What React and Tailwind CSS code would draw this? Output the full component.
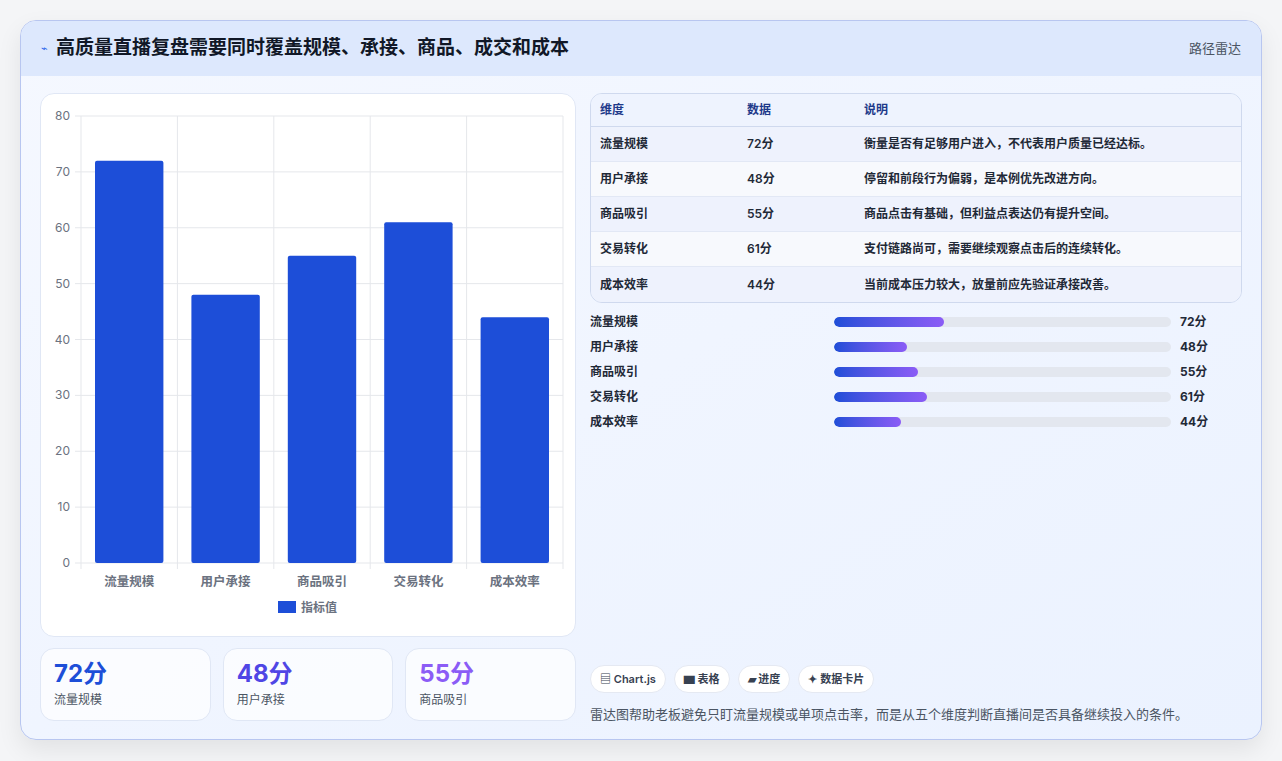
import React from "react";

const dims = [
  ["流量规模", 72, "衡量是否有足够用户进入，不代表用户质量已经达标。"],
  ["用户承接", 48, "停留和前段行为偏弱，是本例优先改进方向。"],
  ["商品吸引", 55, "商品点击有基础，但利益点表达仍有提升空间。"],
  ["交易转化", 61, "支付链路尚可，需要继续观察点击后的连续转化。"],
  ["成本效率", 44, "当前成本压力较大，放量前应先验证承接改善。"],
];

function Chart() {
  const x0 = 40, x1 = 522, yTop = 22, yBot = 469;
  const cw = (x1 - x0) / 5;
  const y = (v) => yBot - (v / 80) * (yBot - yTop);
  return (
    <svg width="535" height="543" className="block">
      {[0,10,20,30,40,50,60,70,80].map((v) => (
        <g key={v}>
          <line x1={x0 - 6} x2={x1} y1={y(v)} y2={y(v)} stroke="#e5e7eb" />
          <text x={x0 - 11} y={y(v) + 4} textAnchor="end" fontSize="12" fill="#6b7280">{v}</text>
        </g>
      ))}
      {[0,1,2,3,4,5].map((i) => (
        <line key={i} x1={x0 + i * cw} x2={x0 + i * cw} y1={yTop} y2={yBot + 6} stroke="#e5e7eb" />
      ))}
      {dims.map(([n, v], i) => (
        <g key={n}>
          <rect x={x0 + i * cw + 14} y={y(v)} width={cw - 28} height={yBot - y(v)} fill="#1d4ed8" rx="2" />
          <text x={x0 + i * cw + cw / 2} y={yBot + 23} textAnchor="middle" fontSize="12.5" fill="#6b7280" fontWeight="600">{n}</text>
        </g>
      ))}
      <rect x="237" y="507" width="18" height="12" fill="#1d4ed8" />
      <text x="260" y="518" fontSize="12" fill="#6b7280" fontWeight="600">指标值</text>
    </svg>
  );
}

export default function App() {
  return (
    <div className="w-[1282px] h-[761px] bg-[#f4f5f7] pt-[20px] pl-[20px]" style={{ fontFamily: "Inter, 'Noto Sans CJK SC', sans-serif" }}>
      <div className="w-[1242px] h-[720px] rounded-[16px] border border-[#b8c6f0] bg-gradient-to-br from-[#f5f8ff] to-[#ebf2ff] overflow-hidden shadow-[0_10px_24px_rgba(0,0,0,0.08)] flex flex-col">
        <div className="h-[55px] shrink-0 bg-[#dde8fd] flex items-center justify-between px-[20px]">
          <div className="flex items-center gap-[8px]">
            <span className="text-[#2563eb] text-[11px]">⌁</span>
            <span className="text-[19px] font-bold text-[#111827]">高质量直播复盘需要同时覆盖规模、承接、商品、成交和成本</span>
          </div>
          <span className="text-[13px] text-[#4b5563]">路径雷达</span>
        </div>
        <div className="flex gap-[14px] px-[19px] pt-[17px]">
          <div className="w-[536px] flex flex-col gap-[11px]">
            <div className="h-[544px] bg-white rounded-[14px] border border-[#e0e7f5]"><Chart /></div>
            <div className="grid grid-cols-3 gap-[12px]">
              {[["72分","流量规模","text-[#1d4ed8]"],["48分","用户承接","text-[#4f46e5]"],["55分","商品吸引","text-[#8b5cf6]"]].map(([a,b,c]) => (
                <div key={b} className="h-[73px] rounded-[14px] border border-[#e0e7f5] bg-white/70 px-[13px] pt-[10px]">
                  <div className={`text-[24px] font-bold leading-[30px] ${c}`}>{a}</div>
                  <div className="text-[12px] text-[#4b5563] mt-[2px]">{b}</div>
                </div>
              ))}
            </div>
          </div>
          <div className="flex-1 flex flex-col">
            <div className="rounded-[12px] border border-[#cfd9ee] overflow-hidden text-[12px]">
              <div className="h-[33px] flex items-center bg-[#eef3fe] border-b border-[#cfd9ee] font-semibold text-[#1e3a8a]">
                <span className="w-[156px] pl-[9px]">维度</span><span className="w-[117px]">数据</span><span>说明</span>
              </div>
              {dims.map(([n, v, d], i) => (
                <div key={n} className={`h-[35px] flex items-center text-[#1f2937] font-semibold ${i % 2 === 0 ? "bg-[#eef2fd]" : "bg-[#f7f9fd]"} ${i < 4 ? "border-b border-[#e2e8f5]" : ""}`}>
                  <span className="w-[156px] pl-[9px]">{n}</span><span className="w-[117px]">{v}分</span><span>{d}</span>
                </div>
              ))}
            </div>
            <div className="mt-[10px] flex flex-col gap-[8px]">
              {dims.map(([n, v]) => (
                <div key={n} className="h-[17px] flex items-center text-[12px] font-semibold text-[#1f2937]">
                  <span className="w-[244px]">{n}</span>
                  <div className="w-[337px] h-[10px] rounded-full bg-[#e3e7ef] overflow-hidden">
                    <div className="h-full rounded-full bg-gradient-to-r from-[#1d4ed8] to-[#8b5cf6]" style={{ width: `${v * 1.53}px` }} />
                  </div>
                  <span className="ml-[9px] font-bold">{v}分</span>
                </div>
              ))}
            </div>
            <div className="mt-auto flex gap-[8px] pt-[0px]" style={{ marginTop: 235 }}>
              {["▤ Chart.js", "▆ 表格", "▰ 进度", "✦ 数据卡片"].map((t) => (
                <span key={t} className="h-[28px] px-[9px] flex items-center rounded-full bg-white border border-[#e5e9f2] text-[11px] font-semibold text-[#374151]">{t}</span>
              ))}
            </div>
            <div className="mt-[12px] text-[13px] text-[#4b5563]">雷达图帮助老板避免只盯流量规模或单项点击率，而是从五个维度判断直播间是否具备继续投入的条件。</div>
          </div>
        </div>
      </div>
    </div>
  );
}
